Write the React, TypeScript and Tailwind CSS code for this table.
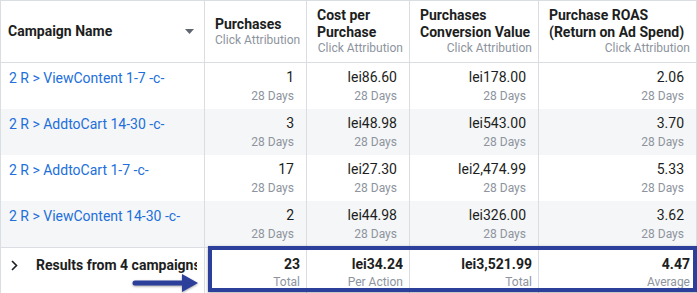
import React from 'react';

type Row = {
    name: string;
    purchases: string;
    cost: string;
    value: string;
    roas: string;
};

const rows: Row[] = [
    { name: '2 R > ViewContent 1-7 -c-', purchases: '1', cost: 'lei86.60', value: 'lei178.00', roas: '2.06' },
    { name: '2 R > AddtoCart 14-30 -c-', purchases: '3', cost: 'lei48.98', value: 'lei543.00', roas: '3.70' },
    { name: '2 R > AddtoCart 1-7 -c-', purchases: '17', cost: 'lei27.30', value: 'lei2,474.99', roas: '5.33' },
    { name: '2 R > ViewContent 14-30 -c-', purchases: '2', cost: 'lei44.98', value: 'lei326.00', roas: '3.62' },
];

const grid = 'grid grid-cols-[205px_102px_103px_129px_158px]';

function HeaderCell({ title }: { title: string[] }) {
    return (
        <div className="flex flex-col justify-center border-r border-[#dadde1] pl-[10px] pr-[6px]">
            {title.map((t) => (
                <div key={t} className="text-[14px] font-bold leading-[17px] text-[#1c1e21] whitespace-nowrap">
                    {t}
                </div>
            ))}
            <div className="text-right text-[12px] leading-[15px] text-[#8d949e] whitespace-nowrap">
                Click Attribution
            </div>
        </div>
    );
}

function ValueCell({ value, sub }: { value: string; sub: string }) {
    return (
        <div className="border-r border-[#dadde1] pr-[12px] pt-[5px] text-right">
            <div className="text-[14px] leading-[18px] text-[#1c1e21]">{value}</div>
            <div className="mt-[3px] text-[12px] leading-[15px] text-[#8d949e]">{sub}</div>
        </div>
    );
}

function TotalCell({ value, sub }: { value: string; sub: string }) {
    return (
        <div className="border-r border-[#dadde1] pr-[6px] pt-[7px] text-right">
            <div className="text-[14px] font-bold leading-[18px] text-[#1c1e21]">{value}</div>
            <div className="mt-[2px] text-[12px] leading-[15px] text-[#8d949e]">{sub}</div>
        </div>
    );
}

export default function App() {
    return (
        <div className="relative h-[293px] w-[697px] overflow-hidden bg-white font-['Roboto','Liberation_Sans',sans-serif]">
            {/* Header */}
            <div className={`${grid} h-[63px] border-y border-[#dadde1]`}>
                <div className="flex items-center justify-between border-x border-[#dadde1] pl-[7px] pr-[10px]">
                    <span className="text-[14px] font-bold text-[#1c1e21]">Campaign Name</span>
                    <svg width="9" height="5" viewBox="0 0 9 5">
                        <path d="M0 0 L9 0 L4.5 5 Z" fill="#606770" />
                    </svg>
                </div>
                <HeaderCell title={['Purchases']} />
                <HeaderCell title={['Cost per', 'Purchase']} />
                <HeaderCell title={['Purchases', 'Conversion Value']} />
                <HeaderCell title={['Purchase ROAS', '(Return on Ad Spend)']} />
            </div>

            {/* Rows */}
            {rows.map((r, i) => (
                <div key={r.name} className={`${grid} h-[46px] ${i % 2 === 1 ? 'bg-[#f5f6f7]' : 'bg-white'}`}>
                    <div className="border-x border-[#dadde1] pl-[8px] pt-[3px]">
                        <span className="text-[14px] leading-[18px] text-[#216fdb] whitespace-nowrap">{r.name}</span>
                    </div>
                    <ValueCell value={r.purchases} sub="28 Days" />
                    <ValueCell value={r.cost} sub="28 Days" />
                    <ValueCell value={r.value} sub="28 Days" />
                    <ValueCell value={r.roas} sub="28 Days" />
                </div>
            ))}

            {/* Totals */}
            <div className={`${grid} h-[46px] border-t border-[#dadde1] bg-white`}>
                <div className="flex items-start border-x border-[#dadde1] pr-[7px] pt-[8px]">
                    <svg width="7" height="11" viewBox="0 0 7 11" className="ml-[10px] mt-[4px] shrink-0">
                        <path d="M1 1 L5.5 5.5 L1 10" fill="none" stroke="#1c1e21" strokeWidth="1.6" />
                    </svg>
                    <span className="ml-[18px] min-w-0 overflow-hidden whitespace-nowrap text-[14px] font-bold leading-[18px] text-[#1c1e21]">
                        Results from 4 campaigns
                    </span>
                </div>
                <TotalCell value="23" sub="Total" />
                <TotalCell value="lei34.24" sub="Per Action" />
                <TotalCell value="lei3,521.99" sub="Total" />
                <TotalCell value="4.47" sub="Average" />
            </div>

            {/* Highlight box */}
            <div className="absolute left-[208px] top-[246px] h-[46px] w-[489px] border-4 border-[#2b3f9b] shadow-[0_1px_3px_rgba(0,0,0,0.35)]" />

            {/* Arrow */}
            <svg width="70" height="22" viewBox="0 0 70 22" className="absolute left-[131px] top-[272px] drop-shadow-[0_1px_1px_rgba(0,0,0,0.35)]">
                <path d="M4 8.5 L52 8.5 L52 13.5 L4 13.5 Q1.5 13.5 1.5 11 Q1.5 8.5 4 8.5 Z" fill="#2b3f9b" />
                <path d="M51 2 L67 11 L51 20 Z" fill="#2b3f9b" />
            </svg>
        </div>
    );
}
